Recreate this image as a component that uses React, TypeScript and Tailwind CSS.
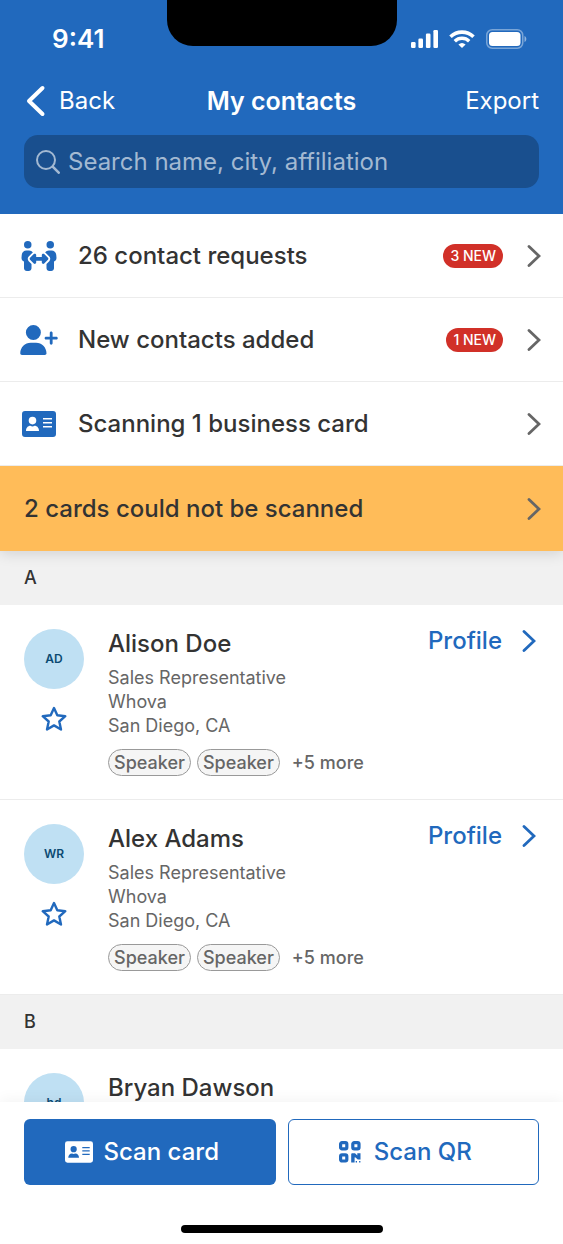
import React, { useState } from 'react';
import { FaPeopleArrows, FaUserPlus } from 'react-icons/fa6';

interface ContactDetails {
  title: string;
  company: string;
  location: string;
  tags: string[];
  moreTags: number;
}

interface Contact {
  id: string;
  name: string;
  initials: string;
  details?: ContactDetails;
}

interface ContactSection {
  letter: string;
  contacts: Contact[];
}

const details: ContactDetails = {
  title: 'Sales Representative',
  company: 'Whova',
  location: 'San Diego, CA',
  tags: ['Speaker', 'Speaker'],
  moreTags: 5,
};

const sections: ContactSection[] = [
  {
    letter: 'A',
    contacts: [
      { id: 'alison', name: 'Alison Doe', initials: 'AD', details },
      { id: 'alex', name: 'Alex Adams', initials: 'WR', details },
    ],
  },
  {
    letter: 'B',
    contacts: [{ id: 'bryan', name: 'Bryan Dawson', initials: 'bd' }],
  },
];

const Chevron = ({ className }: { className?: string }) => (
  <svg viewBox="0 0 14 22" fill="none" stroke="currentColor" strokeWidth="2.8" className={`h-[22px] w-[14px] shrink-0 ${className ?? ''}`} aria-hidden="true">
    <path d="M2 1.500 12 11 2 20.500" strokeLinecap="round" strokeLinejoin="miter" />
  </svg>
);

const CardIcon = ({ className }: { className?: string }) => (
  <svg viewBox="0 0 34 26" className={className} aria-hidden="true">
    <path
      fill="currentColor"
      fillRule="evenodd"
      d="M3 0h28A3 3 0 0 1 34 3v20a3 3 0 0 1-3 3H3a3 3 0 0 1-3-3V3A3 3 0 0 1 3 0ZM10.500 5.800a3.800 3.800 0 1 0 0 7.600 3.800 3.800 0 0 0 0-7.600ZM8.500 14.800C5.800 14.800 4 17 4 20h13c0-3-1.800-5.200-4.500-5.200-.6.400-1.300.6-2 .6s-1.400-.2-2-.6ZM21 7v1.500h9V7h-9Zm0 4v1.500h9V11h-9Zm0 4v1.500h9V15h-9Z"
    />
  </svg>
);

const QrIcon = () => (
  <svg viewBox="0 0 22 22" className="h-[22px] w-[22px]" aria-hidden="true">
    <g fill="none" stroke="currentColor" strokeWidth="3.200">
      <rect x="1.600" y="1.600" width="6.200" height="6.200" rx="1.400" />
      <rect x="13.800" y="1.600" width="6.200" height="6.200" rx="1.400" />
      <rect x="1.600" y="13.800" width="6.200" height="6.200" rx="1.400" />
    </g>
    <path fill="currentColor" d="M13.200 12.200H16l2.300 2.200V12.200h3.200v6.300h-2.700l-2.600-2.200-.6.200v5.100h-3.400v-8.400a1 1 0 0 1 1-1Zm3.500 7.900h1.300v1.400h-1.300zm3.400 0h1.300v1.400h-1.300z" />
  </svg>
);

const StatusBar = () => (
  <div className="relative flex h-[74px] items-center justify-between pr-[36px] pl-[52px] pt-1">
    <span className="text-[26px] leading-8 font-semibold">9:41</span>
    <div className="absolute inset-x-0 top-0 mx-auto h-[46px] w-[230px] rounded-b-[26px] bg-black" />
    <div className="flex items-center gap-[11px]">
      <svg viewBox="0 0 27 18" fill="currentColor" className="h-[18px] w-[27px]" aria-hidden="true">
        <rect x="0" y="12" width="4.600" height="6" rx="1.200" />
        <rect x="7.400" y="8.500" width="4.600" height="9.500" rx="1.200" />
        <rect x="14.900" y="3.500" width="4.600" height="14.500" rx="1.200" />
        <rect x="22.400" y="0" width="4.600" height="18" rx="1.200" />
      </svg>
      <svg viewBox="0 0 26 18" fill="none" className="h-[18px] w-[26px]" aria-hidden="true">
        <path d="M1.500 6.800a16.500 16.500 0 0 1 23 0" stroke="currentColor" strokeWidth="3.600" />
        <path d="M5.800 11.200a10.400 10.400 0 0 1 14.400 0" stroke="currentColor" strokeWidth="3.400" />
        <path d="M13 18 9.400 14.500a5.400 5.400 0 0 1 7.200 0Z" fill="currentColor" />
      </svg>
      <svg viewBox="0 0 41 20" fill="none" className="h-5 w-[41px]" aria-hidden="true">
        <rect x="0.750" y="0.750" width="36" height="18.500" rx="5.500" stroke="currentColor" strokeOpacity="0.400" strokeWidth="1.500" />
        <rect x="3" y="3" width="31.500" height="14" rx="3.500" fill="currentColor" />
        <path d="M38.500 7v6c2.400-1 2.400-5 0-6Z" fill="currentColor" fillOpacity="0.500" />
      </svg>
    </div>
  </div>
);

interface MenuRowProps {
  icon: React.ReactNode;
  label: string;
  badge?: string;
}

const MenuRow = ({ icon, label, badge }: MenuRowProps) => (
  <button type="button" className="flex h-[84px] w-full items-center border-b border-[#ececec] pr-[22px] pl-5 text-left">
    <span className="flex w-[38px] justify-center text-[#2169bd]">{icon}</span>
    <span className="ml-5 flex-1 text-[24px] leading-8 font-medium">{label}</span>
    {badge && (
      <span className="mr-6 rounded-full bg-[#d13028] px-[7px] text-[14px] leading-6 font-medium text-white">{badge}</span>
    )}
    <Chevron className="text-[#666]" />
  </button>
);

interface ContactRowProps {
  contact: Contact;
  starred: boolean;
  onToggleStar: (id: string) => void;
}

const ContactRow = ({ contact, starred, onToggleStar }: ContactRowProps) => (
  <li className="flex items-start border-b border-[#ececec] px-6 pt-6 pb-[23px]">
    <div className="flex w-[60px] flex-col items-center">
      <div className="flex h-[60px] w-[60px] items-center justify-center rounded-full bg-[#bfe0f3] text-[12px] font-semibold text-[#0b4a72]">
        {contact.initials}
      </div>
      <button type="button" className="mt-[17px] text-[#2169bd]" aria-label={`Star ${contact.name}`} aria-pressed={starred} onClick={() => onToggleStar(contact.id)}>
        <svg viewBox="0 0 26 26" fill={starred ? 'currentColor' : 'none'} stroke="currentColor" strokeWidth="2.400" strokeLinejoin="round" className="h-[26px] w-[26px]" aria-hidden="true">
          <path d="m13 2 3.300 7.300 8 .9-6 5.300 1.700 8L13 19.400 6 23.500l1.700-8-6-5.300 8-.9Z" />
        </svg>
      </button>
    </div>
    <div className="ml-6 min-w-0 flex-1">
      <h3 className="text-[24px] leading-[30px] font-medium">{contact.name}</h3>
      {contact.details && (
        <>
          <div className="mt-[7px] text-[18px] leading-6 text-[#666]">
            <p>{contact.details.title}</p>
            <p>{contact.details.company}</p>
            <p>{contact.details.location}</p>
          </div>
          <div className="mt-[11px] flex items-center gap-[6px] text-[18px] font-medium text-[#666]">
            {contact.details.tags.map((tag, index) => (
              <span key={index} className="rounded-full border border-[#999] bg-[#f5f5f5] px-[5px] leading-[25px]">{tag}</span>
            ))}
            <span className="ml-[6px] leading-[25px]">+{contact.details.moreTags} more</span>
          </div>
        </>
      )}
    </div>
    {contact.details && (
      <a href={`#${contact.id}`} className="-mt-1 flex items-center gap-5 pr-[3px] text-[24px] leading-8 font-medium text-[#2169bd]">
        Profile
        <Chevron />
      </a>
    )}
  </li>
);

const App: React.FC = () => {
  const [searchTerm, setSearchTerm] = useState('');
  const [starred, setStarred] = useState<string[]>([]);

  const toggleStar = (id: string) => {
    setStarred((prev) => (prev.includes(id) ? prev.filter((item) => item !== id) : [...prev, id]));
  };

  return (
    <div className="flex h-screen flex-col overflow-hidden bg-white font-['Inter',sans-serif] text-[#333]">
      <header className="relative z-10 shrink-0 bg-[#2169bd] pb-[26px] text-white">
        <StatusBar />
        <div className="grid h-[54px] grid-cols-3 items-center px-6 text-[24px] leading-8">
          <button type="button" className="flex items-center gap-[13px] justify-self-start pl-[2px]">
            <svg viewBox="0 0 20 32" fill="none" stroke="currentColor" strokeWidth="4" strokeLinecap="round" strokeLinejoin="round" className="h-8 w-5" aria-hidden="true">
              <path d="M16.500 3 3 16l13.500 13" />
            </svg>
            Back
          </button>
          <h1 className="text-center text-[25px] font-semibold whitespace-nowrap">My contacts</h1>
          <button type="button" className="justify-self-end">Export</button>
        </div>
        <label className="mx-6 mt-[7px] flex h-[53px] items-center gap-2 rounded-[14px] bg-[#194f8e] px-3 text-[#a3b9d2]">
          <svg viewBox="0 0 24 24" fill="none" stroke="currentColor" strokeWidth="2" strokeLinecap="round" className="h-6 w-6 shrink-0" aria-hidden="true">
            <circle cx="10" cy="10" r="9" />
            <path d="m16.700 16.700 6 6" strokeWidth="2.600" />
          </svg>
          <input
            type="text"
            aria-label="Search contacts"
            placeholder="Search name, city, affiliation"
            className="min-w-0 flex-1 bg-transparent text-[24px] leading-8 placeholder:text-[#a3b9d2] focus:outline-none"
            value={searchTerm}
            onChange={(e) => setSearchTerm(e.target.value)}
          />
        </label>
      </header>

      <nav className="relative shrink-0 bg-white shadow-[0_2px_14px_rgba(0,0,0,0.14)]">
        <MenuRow icon={<FaPeopleArrows className="h-[30px] w-[38px]" />} label="26 contact requests" badge="3 NEW" />
        <MenuRow icon={<FaUserPlus className="h-[30px] w-[38px]" />} label="New contacts added" badge="1 NEW" />
        <MenuRow icon={<CardIcon className="h-[26px] w-[34px]" />} label="Scanning 1 business card" />
        <button type="button" className="flex h-[85px] w-full items-center justify-between bg-[#ffbc59] pr-[22px] pl-6 text-left text-[24px] leading-8 font-medium">
          2 cards could not be scanned
          <Chevron className="text-[#666]" />
        </button>
      </nav>

      <main className="min-h-0 flex-1 overflow-hidden">
        {sections.map((section) => (
          <section key={section.letter}>
            <h2 className="h-[54px] bg-[#f1f1f1] px-6 text-[18px] leading-[54px] font-medium">{section.letter}</h2>
            <ul>
              {section.contacts.map((contact) => (
                <ContactRow key={contact.id} contact={contact} starred={starred.includes(contact.id)} onToggleStar={toggleStar} />
              ))}
            </ul>
          </section>
        ))}
      </main>

      <footer className="relative shrink-0 bg-white pt-[17px] pb-[11px] shadow-[0_-2px_14px_rgba(0,0,0,0.05)]">
        <div className="grid grid-cols-2 gap-3 px-6 text-[24px] leading-8 font-medium">
          <button type="button" className="flex h-[66px] items-center justify-center gap-[11px] rounded-md bg-[#2169bd] pr-4 text-white">
            <CardIcon className="h-[22px] w-7" />
            Scan card
          </button>
          <button type="button" className="flex h-[66px] items-center justify-center gap-[13px] rounded-md border border-[#2169bd] pr-4 text-[#2169bd]">
            <QrIcon />
            Scan QR
          </button>
        </div>
        <div className="mx-auto mt-10 h-2 w-[202px] rounded-full bg-black" />
      </footer>
    </div>
  );
};

export default App;
